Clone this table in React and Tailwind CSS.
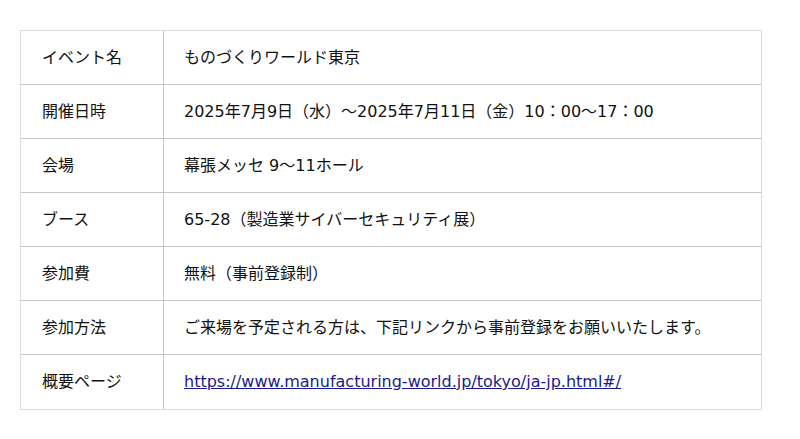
import React from "react";

const rows = [
  ["イベント名", "ものづくりワールド東京"],
  ["開催日時", "2025年7月9日（水）～2025年7月11日（金）10：00～17：00"],
  ["会場", "幕張メッセ 9～11ホール"],
  ["ブース", "65-28（製造業サイバーセキュリティ展）"],
  ["参加費", "無料（事前登録制）"],
  ["参加方法", "ご来場を予定される方は、下記リンクから事前登録をお願いいたします。"],
  ["概要ページ", null],
];

export default function App() {
  return (
    <div
      className="bg-white w-[800px] h-[439px] pt-[30px] pl-[20px] text-[16px] text-[#111]"
      style={{ fontFamily: '"DejaVu Sans", "Noto Sans CJK JP", sans-serif' }}
    >
      <div className="w-[742px] border border-[#dcdcdc] flex flex-col">
        {rows.map(([k, v], i) => (
          <div
            key={k}
            className={`flex h-[54px] ${i < rows.length - 1 ? "border-b border-[#c4c4c4]" : ""}`}
          >
            <div className="w-[143px] shrink-0 border-r border-[#c4c4c4] flex items-center pl-[21px]">
              {k}
            </div>
            <div className="flex-1 flex items-center pl-[20px]">
              {v === null ? (
                <a href="#" className="text-[#1a1a8e] underline">
                  https://www.manufacturing-world.jp/tokyo/ja-jp.html#/
                </a>
              ) : (
                v
              )}
            </div>
          </div>
        ))}
      </div>
    </div>
  );
}
